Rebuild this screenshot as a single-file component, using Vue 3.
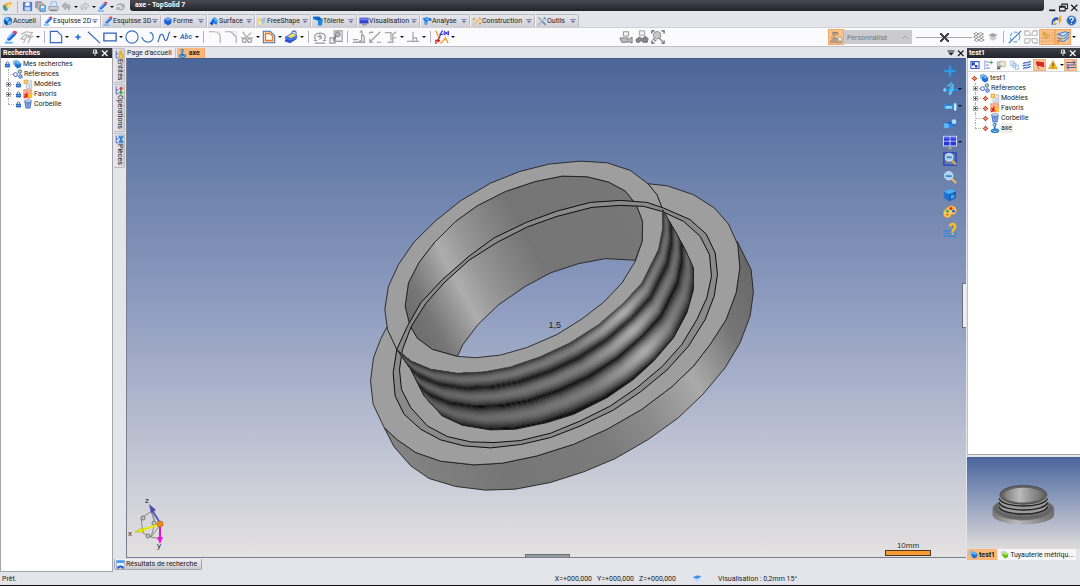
<script setup>
const quick = [
  { icon: 'save', label: 'Enregistrer' },
  { icon: 'saveall', label: 'Tout enregistrer' },
  { icon: 'print', label: 'Imprimer' },
  { icon: 'undo', label: 'Annuler', menu: true },
  { icon: 'redo', label: 'Rétablir', menu: true },
  { icon: 'pencil', label: 'Modifier', menu: true },
  { icon: 'refresh', label: 'Actualiser' },
]

const ribbon = [
  { icon: 'home', text: 'Accueil', size: 'w40', plain: true },
  { icon: 'pencil', text: 'Esquisse 2D', size: 'w60', active: true },
  { icon: 'pencil', text: 'Esquisse 3D', size: 'w60' },
  { icon: 'forme', text: 'Forme', size: 'w46' },
  { icon: 'surface', text: 'Surface', size: 'w48' },
  { icon: 'freeshape', text: 'FreeShape', size: 'w56' },
  { icon: 'tolerie', text: 'Tôlerie', size: 'w46' },
  { icon: 'monitor', text: 'Visualisation', size: 'w63' },
  { icon: 'analyse', text: 'Analyse', size: 'w50' },
  { icon: 'construct', text: 'Construction', size: 'w65' },
  { icon: 'tools', text: 'Outils', size: 'w44' },
]

const toolsLeft = [
  ['pencil', 'Esquisse'], ['sketch', 'Opération', 1], null,
  ['page', 'Contour', 1], ['point', 'Point'], ['line', 'Ligne'], ['rect', 'Rectangle', 1],
  ['circle', 'Cercle'], ['arc', 'Arc'], ['spline', 'Spline', 1], ['abc', 'Texte', 1], null,
  ['fillet', 'Congé'], ['chamfer', 'Chanfrein'], ['cut', 'Limiter', 1], ['offset', 'Décalage', 1], ['book', 'Plan', 1], null,
  ['gauge', 'Mesure'], ['inspect', 'Inspecter'], null,
  ['dim1', 'Cote horizontale'], ['dim2', 'Cote oblique'], ['dim3', 'Cote alignée', 1], ['perp', 'Contrainte', 1], null,
  ['fx', 'Fonction', 1],
]

const toolsMid = [['cam', 'Filmer'], ['bino', 'Chercher'], ['frame', 'Cadrer']]
const toolsRight = [['hatch', 'Transparence'], ['cone', 'Couche']]
const toolsEnd = [['compass', 'Cercle tangent'], ['four', 'Symétrie'], ['grid', 'Grille', true], ['layers', 'Calques', true]]

const sideTabs = [
  { icon: 'ent', text: 'Entités', size: 'h35' },
  { icon: 'ops', text: 'Opérations', size: 'h48' },
  { icon: 'parts', text: 'Pièces', size: 'h35' },
]

const leftTree = [
  { mark: 'lock', icon: 'cubes', text: 'Mes recherches', root: true },
  { icon: 'refs', text: 'Références', bare: true },
  { mark: 'lock', icon: 'models', text: 'Modèles', plus: true },
  { mark: 'lock', icon: 'fav', text: 'Favoris', plus: true },
  { mark: 'lock', icon: 'bin', text: 'Corbeille', last: true },
]

const rightTree = [
  { mark: 'cross', icon: 'cubes', text: 'test1', root: true },
  { icon: 'refs', text: 'Références', bare: true, plus: true },
  { mark: 'cross', icon: 'models', text: 'Modèles', plus: true },
  { mark: 'cross', icon: 'fav', text: 'Favoris', plus: true },
  { mark: 'cross', icon: 'bin', text: 'Corbeille' },
  { mark: 'cross', icon: 'part', text: 'axe', last: true, chosen: true },
]

const panelTools = [
  ['zoomsel', 'Sélection'], ['treeadd', 'Développer'], ['copyset', 'Dépendances'], ['pages', 'Versions'],
  ['waves', 'Couches'], ['flag', 'Signaler', true], ['warn', 'Alertes', false, true], ['swap', 'Synchroniser', true],
]

const viewTools = [
  ['plus', 'Centrer'], ['plane', 'Orienter', 1], ['camera', 'Caméra', 1], ['binocular', 'Observer'], ['views', 'Vues', 1],
  ['zoombox', 'Zoom fenêtre'], ['zoom', 'Zoom'], ['cube', 'Perspective'], ['palette', 'Couleurs'], ['help', 'Aide'],
]

// Thread: the rim outline is swept along the part's axis, darkest in each groove.
const grooves = [-0.02, 0.27, 0.6, 1]
const steps = 60
const thread = Array.from({ length: steps + 1 }, (_, i) => {
  const t = 1 - i / steps
  let k = 0
  while (k < grooves.length - 2 && t > grooves[k + 1]) k++
  const phase = (t - grooves[k]) / (grooves[k + 1] - grooves[k])
  const light = Math.pow(Math.max(0, Math.sin(Math.PI * phase)), 0.9)
  return { move: `translate(${Math.round(95 * t)} ${Math.round(170 * t)})`, dark: 0.95 * (1 - light) }
})
</script>

<template>
  <svg class="defs" aria-hidden="true">
    <symbol id="logo" viewBox="0 0 16 16"><path d="M1 7l3-3 11-3-3 6-6 7-4-2z" fill="#f7a83c" /><path d="M1 7l7-1 1 6-4 3-3-4z" fill="#2c9bb5" /><path d="M6 6l9-5-3 7-5 4z" fill="#ffc94e" /><path d="M8 7l4-3-3 5z" fill="#fff3c4" /></symbol>
    <symbol id="save" viewBox="0 0 16 16"><path d="M2 2h12v12H2z" fill="#5b7fd6" stroke="#3e57a8" /><path d="M5 2h6v5H5z" fill="#fff" /><path d="M4 9h8v5H4z" fill="#c9dcf7" /></symbol>
    <symbol id="saveall" viewBox="0 0 16 16"><path d="M1 1h8v9H1z" fill="#8fa6dc" stroke="#7486b8" /><path d="M4 3h8v9H4z" fill="#e8c7a2" stroke="#b5884f" /><path d="M7 6h8v9H7z" fill="#78b8e8" stroke="#446fae" /><path d="M9 7h4v3H9z" fill="#fff" /></symbol>
    <symbol id="print" viewBox="0 0 16 16"><path d="M5 1h7l1 7H3z" fill="#d5e6fb" stroke="#8ba6d0" /><path d="M1 8h14v5H1z" fill="#c9cdd8" stroke="#9295a0" /><path d="M3 14h10" stroke="#777" stroke-width="1.500" /></symbol>
    <symbol id="undo" viewBox="0 0 16 16"><path d="M1 7l6-5v3c7-1 8 4 4 9 1-4-1-5-4-4v3z" fill="#b5b5b9" stroke="#8f8f94" stroke-width=".7" /></symbol>
    <symbol id="redo" viewBox="0 0 16 16"><path d="M15 7L9 2v3C2 4 1 9 5 14c-1-4 1-5 4-4v3z" fill="#d6d6da" stroke="#9a9aa0" stroke-width=".7" /></symbol>
    <symbol id="refresh" viewBox="0 0 16 16"><path d="M2 7c1-4 7-5 10-2l2-2v6H8l2-2C8 5 5 5 4 7zM14 9c-1 5-7 6-10 3l-2 2V9h6l-2 2c2 1 5 1 6-2z" fill="#a9a9ae" /></symbol>
    <symbol id="pencil" viewBox="0 0 16 16"><path d="M1 14.500h9" stroke="#57b6f4" stroke-width="2" /><path d="M2 14l2-5 6-7 4 3-7 7z" fill="#1f66e0" /><path d="M4 9l6-7 1.500 1.500-6 6.500z" fill="#86bcff" /><path d="M10 2c1-2 5-1 5 1l-1.500 2.500z" fill="#ee3a45" /><path d="M2 14l1.500-3.500L6 12.500z" fill="#d9dff0" /></symbol>
    <symbol id="sketch" viewBox="0 0 16 16"><path d="M1 5l6-3 7 1-3 4-5-2-5 5 5 1M4 15L8 6l4 3-3 6M9 9l6-2" fill="none" stroke="#b4b4b4" stroke-width="1.300" /></symbol>
    <symbol id="home" viewBox="0 0 16 16"><circle cx="8" cy="8" r="6.500" fill="#1b6fd0" /><path d="M3 4l5-2 2 3-4 4zM8 9l5-2-1 6-4 1z" fill="#79c3ff" /><path d="M2 7l4 3 1 5-4-3z" fill="#0b3f98" /></symbol>
    <symbol id="forme" viewBox="0 0 16 16"><path d="M2 5l6-3 6 3-1 7-5 3-6-4z" fill="#1d5fd8" /><path d="M2 5l6-3 6 3-6 3z" fill="#65a8fb" /></symbol>
    <symbol id="surface" viewBox="0 0 16 16"><path d="M1 11c4-1 2-6 8-9l5 5-2 7-5-3z" fill="#166de0" /><path d="M7 4l3-2 4 5-3 4z" fill="#50b1ff" /><path d="M1 11l6 0-2 4z" fill="#0842a3" /></symbol>
    <symbol id="freeshape" viewBox="0 0 16 16"><path d="M1 3l5 2 8-3-1 8-5 5-5-4z" fill="#f3d54c" /><path d="M6 5l8-3-1 8-6 4z" fill="#9dc4ec" /><path d="M6 5l2 10-5-4z" fill="#ffef9a" /></symbol>
    <symbol id="tolerie" viewBox="0 0 16 16"><path d="M0 1h10l6 5-2 9H8V7L0 5z" fill="#178ae8" /><path d="M0 1h10l4 4-6 2z" fill="#0f63bd" /></symbol>
    <symbol id="monitor" viewBox="0 0 16 16"><path d="M1 3h14v9H1z" fill="#2f3fd4" stroke="#8690c4" /><path d="M2 4h12v3H2z" fill="#6c82f1" /><path d="M5 14h7" stroke="#8b8b9c" stroke-width="2" /></symbol>
    <symbol id="analyse" viewBox="0 0 16 16"><path d="M1 4l6-2 8 2v4l-6-1-1 7-4-1V8z" fill="#1b73dd" /><path d="M5 5h6M6 9v4" stroke="#a8dcff" stroke-width="1.500" /></symbol>
    <symbol id="construct" viewBox="0 0 16 16"><path d="M2 14L13 4" stroke="#f2b64b" stroke-width="3" stroke-dasharray="3 1.500" /><path d="M3 3v4M1 5h4M13 10v4M11 12h4M11 2l4 3" stroke="#e88c2d" stroke-width="1.500" /></symbol>
    <symbol id="tools" viewBox="0 0 16 16"><path d="M2 2l12 12" stroke="#a0a4aa" stroke-width="2.400" /><path d="M2 15L13 3" stroke="#b8bdc4" stroke-width="2.400" /><path d="M11 2l3 3M8 9l6 5" stroke="#4f91c4" stroke-width="1.800" /></symbol>
    <symbol id="page" viewBox="0 0 16 16"><path d="M1.500 1.500h8l5 5v8h-13zM9.500 1.500l5 5" fill="none" stroke="#3467b5" stroke-width="1.300" /></symbol>
    <symbol id="point" viewBox="0 0 16 16"><path d="M8 5v6M5 8h6" stroke="#2f78d8" stroke-width="2" /></symbol>
    <symbol id="line" viewBox="0 0 16 16"><path d="M1 2l14 13" stroke="#3467b5" stroke-width="1.300" /></symbol>
    <symbol id="rect" viewBox="0 0 16 16"><path d="M1 3.500h14v9H1z" fill="none" stroke="#2c62b4" stroke-width="1.500" /></symbol>
    <symbol id="circle" viewBox="0 0 16 16"><circle cx="8" cy="8" r="7" fill="none" stroke="#3a72c0" stroke-width="1.300" /></symbol>
    <symbol id="arc" viewBox="0 0 16 16"><path d="M1 8c2 7 11 8 13 1 0-3-1-6-4-6" fill="none" stroke="#3a72c0" stroke-width="1.300" /></symbol>
    <symbol id="spline" viewBox="0 0 16 16"><path d="M1 14C3 9 3 4 6 5s1 7 4 7 2-8 5-10" fill="none" stroke="#3467b5" stroke-width="1.300" /></symbol>
    <symbol id="fillet" viewBox="0 0 16 16"><path d="M1 2h6c5 0 7 3 7 7v6" fill="none" stroke="#aaa" stroke-width="1.300" /><path d="M8 2h6v5" fill="none" stroke="#ddd" /></symbol>
    <symbol id="chamfer" viewBox="0 0 16 16"><path d="M1 2h7l6 6v7" fill="none" stroke="#aaa" stroke-width="1.300" /><path d="M9 2h5v5" fill="none" stroke="#ddd" /></symbol>
    <symbol id="cut" viewBox="0 0 16 16"><path d="M3 2l5 7M13 3L5 10M1 9h14" stroke="#b0b0b0" stroke-width="1.500" /><circle cx="5" cy="12" r="2.200" fill="none" stroke="#a3a3a3" stroke-width="1.500" /><circle cx="11" cy="12" r="2.200" fill="none" stroke="#a3a3a3" stroke-width="1.500" /></symbol>
    <symbol id="offset" viewBox="0 0 16 16"><path d="M1.500 1.500h8l5 5v8h-13z" fill="#fbe3cf" stroke="#466fae" stroke-width="1.200" /><path d="M4 4h5l3 3v5H4z" fill="#fff" stroke="#ea7a2b" stroke-width="1.500" /></symbol>
    <symbol id="book" viewBox="0 0 16 16"><path d="M1 11l9-4 5 3-8 5-6-2z" fill="#3450c8" /><path d="M1 8l8-5 6 2v4l-7 3-7-2z" fill="#4479e0" /><path d="M4 7l6-3 4 2-6 3z" fill="#ffe053" /><path d="M9 3c2-3 5-2 5 1" fill="none" stroke="#4a67d4" stroke-width="1.500" /></symbol>
    <symbol id="gauge" viewBox="0 0 16 16"><path d="M3 11C-3 1 19 1 13 11M5 7l3 1 0-2 2 3-3 2M1 12h4M11 12h4M2 15h12" fill="none" stroke="#999" stroke-width="1.300" /></symbol>
    <symbol id="inspect" viewBox="0 0 16 16"><path d="M6 1h9v12H6zM1 9h6v6H1z" fill="#f1f1f1" stroke="#999" stroke-width="1.200" /><circle cx="10" cy="5" r="2.800" fill="#bbb" stroke="#777" /><path d="M8 7l-3 5" stroke="#777" stroke-width="1.500" /></symbol>
    <symbol id="dim1" viewBox="0 0 16 16"><path d="M1 11h6M1 14h14M9 3l2-2 1 4 2 3v5M11 5v7l-3 1" fill="none" stroke="#a3a3a3" stroke-width="1.500" /></symbol>
    <symbol id="dim2" viewBox="0 0 16 16"><path d="M2 14L14 2M1 4l3-2M10 14h5M3 2l3 1M2 10v4h4" fill="none" stroke="#999" stroke-width="1.300" /></symbol>
    <symbol id="dim3" viewBox="0 0 16 16"><path d="M1 3h7v9M4 14h7M10 13V5l4-3M10 9h4" fill="none" stroke="#a9a9a9" stroke-width="1.500" /></symbol>
    <symbol id="perp" viewBox="0 0 16 16"><path d="M8 2v11M1 13h14M8 9h4v4" fill="none" stroke="#a6a6a6" stroke-width="1.400" /></symbol>
    <symbol id="fx" viewBox="0 0 16 16"><path d="M1 1l4 9M6 15l2-1 4-5 3 6" fill="none" stroke="#f09a2c" stroke-width="1.500" /><path d="M4 10c2 0 2-9 5-9M5 5h4M11 1c-1 2-1 3 0 5M15 1c1 2 1 3 0 5M11.500 2l3 3M14.500 2l-3 3" fill="none" stroke="#2f2fe0" stroke-width="1.200" /><path d="M1 16v-4h4M3 10l2 2-2 2" fill="none" stroke="#e02020" stroke-width="1.500" /></symbol>
    <symbol id="cam" viewBox="0 0 16 16"><path d="M5 2h6v5H5z" fill="#f3f3f3" stroke="#888" /><path d="M1 9h9v2l5-3v7l-5-2v1H3z" fill="#bbb" stroke="#777" /></symbol>
    <symbol id="bino" viewBox="0 0 16 16"><path d="M5 1h6v5H5z" fill="#f3f3f3" stroke="#999" /><path d="M1 11l4-3 3 2 4-3 3 3-1 4H9L7 12l-2 2H2z" fill="#888" stroke="#666" /></symbol>
    <symbol id="frame" viewBox="0 0 16 16"><path d="M1 4V1h3M12 1h3v3M1 12v3h3M15 12v3h-3" fill="none" stroke="#555" stroke-width="1.300" /><circle cx="7" cy="6" r="4.300" fill="#c9c9c9" stroke="#888" /><path d="M9 9l5 5M2 10l4 3" stroke="#999" stroke-width="2" /></symbol>
    <symbol id="shade" viewBox="0 0 16 16"><path d="M3 2h6l-1 5H4zM1 12l5-3h5l4 3v3H1z" fill="#b99b82" /><path d="M10 12c0-6 5-5 5 0" fill="#eee" stroke="#999" /><path d="M5 3h5v3M2 9h6" stroke="#777" fill="none" /></symbol>
    <symbol id="hatch" viewBox="0 0 16 16"><path d="M1 4l3-2 3 2-3 2zM7 4l3-2 4 2-4 2zM1 8l3-2 3 2-3 2zM8 8l3-2 3 2-3 2zM2 12l3-2 3 2-3 2zM8 12l3-2 4 2-4 2z" fill="#fff" stroke="#777" stroke-width="1" /></symbol>
    <symbol id="cone" viewBox="0 0 16 16"><path d="M3 5l5-2 5 2-1 6-4 2-4-2z" fill="#cfcfcf" /><path d="M2 5l6-2 6 2-6 3z" fill="#a2a2a2" /></symbol>
    <symbol id="compass" viewBox="0 0 16 16"><circle cx="8" cy="8" r="5.500" fill="none" stroke="#6fa8de" stroke-width="1.300" stroke-dasharray="4 2" /><path d="M1 15L15 1" stroke="#3a6fba" stroke-width="1.400" /></symbol>
    <symbol id="four" viewBox="0 0 16 16"><path d="M1 6V1h4c2 1 2 3 2 5zM15 6V1h-4C9 2 9 4 9 6zM1 10v5h4c2-1 2-3 2-5zM15 10v5h-4c-2-1-2-3-2-5z" fill="#fff" stroke="#b4b4b4" stroke-width="1.200" /></symbol>
    <symbol id="grid" viewBox="0 0 16 16"><path d="M3 2v12M7 2v12M11 2v12M14.500 2v12M1 5h14M1 9h14M1 13h14" stroke="#cf9255" stroke-dasharray="1 1.500" /><path d="M4 2l6 5-4 3z" fill="#ffb82d" stroke="#b87b2e" stroke-width=".7" /></symbol>
    <symbol id="layers" viewBox="0 0 16 16"><path d="M2 5l8-3 5 1-7 4zM1 9l8 1 6-5M1 12l8 1 6-5" fill="#d6e3f2" stroke="#4a86cf" stroke-width="1.300" /><path d="M1 15l6-6" stroke="#e98a28" stroke-width="2" /></symbol>
    <symbol id="fish" viewBox="0 0 16 16"><path d="M1 14V9c2-5 6-7 10-5l-1 4C8 6 6 7 5 11l3 1-1 2z" fill="#2554c8" /><path d="M3 9h4v5H3z" fill="#f8cf3f" /><path d="M13 1l2 0-1 5h2l-5 9 1-7h-2z" fill="#f0a020" /></symbol>
    <symbol id="qmark" viewBox="0 0 16 16"><circle cx="8" cy="8" r="7" fill="#2866b8" stroke="#8eb2dc" /><path d="M5.500 6c0-4 6-3 5 0-1 2-2.500 2-2.500 4M8 11.500v1.500" fill="none" stroke="#fff" stroke-width="1.700" /></symbol>
    <symbol id="pin" viewBox="0 0 16 16"><path d="M5 2h6v6h2M3 8h10M9.500 2v6M5 2v6M8 8v6" fill="none" stroke="currentColor" stroke-width="1.600" /></symbol>
    <symbol id="close" viewBox="0 0 16 16"><path d="M2 3l11 11M13 3L2 14" stroke="currentColor" stroke-width="2.400" /></symbol>
    <symbol id="min" viewBox="0 0 16 16"><path d="M2 13h11" stroke="currentColor" stroke-width="3" /></symbol>
    <symbol id="restore" viewBox="0 0 16 16"><path d="M5 6V2h10v8h-4M1 6h10v8H1zM1 7.500h10" fill="none" stroke="currentColor" stroke-width="1.800" /></symbol>
    <symbol id="drop" viewBox="0 0 16 16"><path d="M1 3h14v2H1zM2 7h12l-6 6z" fill="currentColor" /></symbol>
    <symbol id="lock" viewBox="0 0 16 16"><path d="M5 8V5c0-4 6-4 6 0v3" fill="none" stroke="#3c6c9f" stroke-width="2" /><path d="M3 7h10v7H3z" fill="#1b6fd8" stroke="#0c3f8c" /><path d="M5 10h6" stroke="#8ac8ff" stroke-width="1.500" /></symbol>
    <symbol id="cross" viewBox="0 0 16 16"><path d="M8 1l3 4 4 3-4 3-3 4-3-4-4-3 4-3z" fill="#b8452c" /><path d="M7 5h2v2h2v2H9v2H7V9H5V7h2z" fill="#f0a080" /></symbol>
    <symbol id="cubes" viewBox="0 0 16 16"><path d="M1 3l6-2 5 3v6l-6 2-4-3z" fill="#80b8ea" /><path d="M5 6l5-2 5 3-1 6-5 2-4-3z" fill="#1d6fd2" /><path d="M5 6l5-2 5 3-5 2z" fill="#62b1f5" /></symbol>
    <symbol id="green" viewBox="0 0 16 16"><path d="M1 3l6-2 5 3v6l-6 2-4-3z" fill="#c6d7e6" /><path d="M4 6l6-2 5 3-1 6-5 2-4-3z" fill="#6fbf1f" /><path d="M4 6l6-2 5 3-5 2z" fill="#b9ee5a" /></symbol>
    <symbol id="refs" viewBox="0 0 16 16"><path d="M4 9l7-5M4 9l8 4M11 4l1 9" stroke="#8a8f98" /><circle cx="4" cy="9" r="3" fill="#fff" stroke="#5674c9" stroke-width="1.700" /><circle cx="11" cy="4" r="2.800" fill="#a8d8a0" stroke="#4774b0" stroke-width="1.500" /><circle cx="12" cy="12" r="2.800" fill="#9ebcf0" stroke="#3e5fc0" stroke-width="1.500" /></symbol>
    <symbol id="models" viewBox="0 0 16 16"><path d="M5 3h9v12H5z" fill="#e8ecf2" stroke="#9aa2b0" /><path d="M1 1h7v7H1z" fill="#f2ad4a" /><path d="M3 3h3v3H3z" fill="#fbdc96" /><path d="M8 7h4v7H8z" fill="#c9d2df" /></symbol>
    <symbol id="fav" viewBox="0 0 16 16"><path d="M1 1h13v13H1z" fill="#f9b08d" stroke="#e08a68" /><path d="M6 4l2 4h5l-4 3 1 4-4-2-5 2 2-5-2-2h4z" fill="#e3242b" /><path d="M11 5l1 3h4l-3 3 1 4-4-2-3 1 1-4-2-2h4z" fill="#ffc928" /></symbol>
    <symbol id="bin" viewBox="0 0 16 16"><path d="M2 3h12l-2 12H4z" fill="#5782cf" /><ellipse cx="8" cy="3" rx="6" ry="2" fill="#cfdcf3" stroke="#5d78ad" /><path d="M6 7l.5 6M10 7l-.5 6" stroke="#b4cdf5" stroke-width="1.200" /></symbol>
    <symbol id="part" viewBox="0 0 16 16"><path d="M7 0c5 0 4 4 2 5v4c3-1 6 1 6 4-2 4-12 4-14 0 0-3 3-4 5-4V5C3 4 4 0 7 0z" fill="#2a7fc4" /><circle cx="7" cy="3" r="1.400" fill="#d3efff" /><path d="M4 12c2 2 6 2 8 0" stroke="#9fd6f6" fill="none" stroke-width="1.600" /></symbol>
    <symbol id="ent" viewBox="0 0 16 16"><path d="M2 1v13h4M2 7h4" fill="none" stroke="#3a52cc" stroke-width="1.500" /><circle cx="10" cy="4" r="3.500" fill="#f0b429" /><circle cx="11" cy="11" r="4" fill="#f5c645" stroke="#b98518" /></symbol>
    <symbol id="ops" viewBox="0 0 16 16"><path d="M2 1v13h4M2 7h4" fill="none" stroke="#3a52cc" stroke-width="1.500" /><path d="M11 1l4 4h-3v3H9V5H7z" fill="#e03030" /><path d="M10 15l-4-4h3V8h3v3h3z" fill="#2fa43a" /></symbol>
    <symbol id="parts" viewBox="0 0 16 16"><path d="M2 1v13h4M2 7h4" fill="none" stroke="#3a52cc" stroke-width="1.500" /><path d="M6 1h9v5H6zM7 9h8v6H7z" fill="#5aa6ea" /><path d="M8 2l5 12M13 2L8 14" stroke="#1c63b6" stroke-width="1.400" /></symbol>
    <symbol id="zoomsel" viewBox="0 0 16 16"><path d="M1.500 2.500h13v11h-13z" fill="#fff" stroke="#3f58d4" stroke-width="1.800" /><path d="M4 5l7 6M4 9V5h4M8 11h3V8" fill="none" stroke="#1c3fa8" stroke-width="1.800" /></symbol>
    <symbol id="treeadd" viewBox="0 0 16 16"><path d="M3 1v14" stroke="#3f58d4" stroke-width="1.500" stroke-dasharray="2 1" /><path d="M5 3h4M5 8h4M5 13h6" stroke="#7d93d8" stroke-width="2" /><path d="M13 1v6M10 4h6" stroke="#3aa845" stroke-width="1.600" /></symbol>
    <symbol id="copyset" viewBox="0 0 16 16"><path d="M2 3h9v7H2z" fill="#cfd8ea" stroke="#8390a8" /><path d="M6 2h9v9H6z" fill="#f4e3c2" stroke="#a0a8b8" /><path d="M2 15l6-6M3 10v4h4" fill="none" stroke="#333" stroke-width="1.500" /></symbol>
    <symbol id="pages" viewBox="0 0 16 16"><path d="M2 2h6v7H2zM6 5h5v7H6zM10 8h5v7h-5z" fill="#f4f9ff" stroke="#8eb0d6" stroke-width="1.200" /></symbol>
    <symbol id="waves" viewBox="0 0 16 16"><path d="M2 6c4-4 5 1 12-4M1 10c5-4 6 1 13-4M2 14c4-4 6 1 12-4" fill="none" stroke="#3e69c6" stroke-width="1.900" /><path d="M10 1L7 15" stroke="#7f9fdf" /></symbol>
    <symbol id="flag" viewBox="0 0 16 16"><path d="M1 3c5-3 6 1 13 0l1 8c-4 1-6-3-11-1z" fill="#df2626" /><path d="M2 3l4 12" stroke="#8c5244" stroke-width="1.200" /></symbol>
    <symbol id="warn" viewBox="0 0 16 16"><path d="M8 1l7 13H1z" fill="#fdbc22" stroke="#c58a13" /><path d="M8 5v5M8 11.500v1.500" stroke="#333" stroke-width="1.600" /></symbol>
    <symbol id="swap" viewBox="0 0 16 16"><path d="M0 4h14M11 1l4 3-4 3M16 12H2M5 9l-4 3 4 3M0 8h16" fill="none" stroke="#4a5fae" stroke-width="1.600" /></symbol>
    <symbol id="plus" viewBox="0 0 16 16"><path d="M8 1l1 6 6 1-6 1-1 6-1-6-6-1 6-1z" fill="#27a5f7" stroke="#27a5f7" stroke-width=".8" /></symbol>
    <symbol id="plane" viewBox="0 0 16 16"><path d="M0 9h16" stroke="#1d9af2" stroke-width="2.400" /><path d="M8 1c4 2 4 3 3 7s-3 6-3 7M5 4c4-1 5 1 4 4s-2 5-2 6" fill="none" stroke="#5fc8fb" stroke-width="1.500" /><path d="M3 6l-3 3 3 3z" fill="#8adcff" /></symbol>
    <symbol id="camera" viewBox="0 0 16 16"><path d="M1 4l2 3h6l4-3 2 0v10l-5-3H2l-1 1z" fill="#2f8fe6" /><path d="M3 8h7v3H3z" fill="#8adcff" /><ellipse cx="14" cy="9" rx="1.500" ry="4.500" fill="#c9efff" /></symbol>
    <symbol id="binocular" viewBox="0 0 16 16"><path d="M3 6l5 0 3-4 4 3-2 5-4 0-4 4-4-3z" fill="#1c62cc" /><circle cx="4" cy="10" r="3.200" fill="#5fb6f8" /><circle cx="9" cy="10" r="2.400" fill="#2f86e6" /><circle cx="12.500" cy="5.500" r="2.800" fill="#a5e0ff" /></symbol>
    <symbol id="views" viewBox="0 0 16 16"><path d="M0 1h16v12H0z" fill="#e4e8f4" /><path d="M1 2h6.500v4.500H1zM8.500 2H15v4.500H8.500zM1 7.500h6.500V12H1zM8.500 7.500H15V12H8.500z" fill="#2738d8" /><path d="M1 2h6v2H1zM9 2h6v2H9z" fill="#5a72f0" /><path d="M6 15h4" stroke="#cbb98a" stroke-width="1.500" /></symbol>
    <symbol id="zoombox" viewBox="0 0 16 16"><path d="M1 1h14v14H1z" fill="none" stroke="#2740bb" stroke-width="1.500" /><circle cx="7" cy="6" r="4.500" fill="#9fd6f3" stroke="#d9e5ee" /><path d="M4 6h6" stroke="#4486c4" stroke-width="2" /><path d="M10 10l5 4" stroke="#e4b455" stroke-width="2.400" /></symbol>
    <symbol id="zoom" viewBox="0 0 16 16"><circle cx="6.500" cy="6.500" r="4.800" fill="#9fd6f3" stroke="#d9e5ee" /><path d="M3 7h7" stroke="#4486c4" stroke-width="2" /><path d="M10 10l5 5" stroke="#e9bd63" stroke-width="2.400" /></symbol>
    <symbol id="cube" viewBox="0 0 16 16"><path d="M1 4l8-3 6 3-1 8-7 3-6-4z" fill="#1c70d6" /><path d="M1 4l8-3 6 3-8 3z" fill="#4ab1f6" /><path d="M7 7l8-3-1 8-7 3z" fill="#155ab0" /><path d="M9 8l4-1v4l-4 2z" fill="#3fa5ea" /></symbol>
    <symbol id="palette" viewBox="0 0 16 16"><path d="M5 3c6-5 12 0 10 5s-5 1-6 4-6 4-8 0 0-6 4-9z" fill="#f5cb6a" stroke="#c99137" /><circle cx="5" cy="7" r="1.600" fill="#36a93f" /><circle cx="9" cy="4" r="1.800" fill="#e1262b" /><circle cx="12" cy="7" r="1.600" fill="#2c55d6" /><circle cx="5" cy="11" r="1.500" fill="#f57c1d" /></symbol>
    <symbol id="help" viewBox="0 0 16 16"><path d="M0 9h9M0 12h16M1 15h14" stroke="#2c86dc" stroke-width="1.300" /><path d="M8 4c0-4 6-4 6 0 0 3-3 3-3 6M11 11v2" fill="none" stroke="#ffc321" stroke-width="2.600" /></symbol>
    <symbol id="results" viewBox="0 0 16 16"><path d="M1 1h14v12H1z" fill="#e7f3ff" stroke="#5b9ce0" /><path d="M1 1h14v4H1z" fill="#3f93e8" /><path d="M2 15c0-7 12-7 12 0h-3c0-3-6-3-6 0z" fill="#2446c0" /></symbol>
    <symbol id="dish" viewBox="0 0 16 16"><path d="M1 5l8-3 6 2v7l-7 4-6-4z" fill="#dbe6fa" /><path d="M1 5l8-3 6 2-7 4z" fill="#3d8eea" /><path d="M2 8l6 3 6-4" fill="none" stroke="#9ec3f3" /></symbol>
  </svg>

  <div class="app">
    <header class="titlebar">
      <div class="quick">
        <button class="qb" aria-label="TopSolid"><svg><use href="#logo" /></svg></button>
        <i class="sep"></i>
        <template v-for="q in quick" :key="q.icon">
          <button class="qb" :aria-label="q.label"><svg><use :href="'#' + q.icon" /></svg></button>
          <button v-if="q.menu" class="more narrow" :aria-label="q.label + ' : options'"></button>
        </template>
      </div>
      <h1 class="caption">axe - TopSolid 7</h1>
      <div class="win">
        <button aria-label="Réduire"><svg><use href="#min" /></svg></button>
        <button aria-label="Restaurer"><svg><use href="#restore" /></svg></button>
        <button aria-label="Fermer"><svg><use href="#close" /></svg></button>
      </div>
    </header>

    <nav class="ribbon">
      <button v-for="t in ribbon" :key="t.text" class="rtab" :class="[t.size, { active: t.active }]">
        <svg><use :href="'#' + t.icon" /></svg><span>{{ t.text }}</span>
        <svg v-if="!t.plain" class="dd"><use href="#drop" /></svg>
      </button>
      <span class="grow"></span>
      <button class="qb" aria-label="Assistance"><svg><use href="#fish" /></svg></button>
      <button class="qb" aria-label="Aide"><svg><use href="#qmark" /></svg></button>
    </nav>

    <div class="toolbar">
      <template v-for="(t, i) in toolsLeft" :key="i">
        <i v-if="!t" class="sep"></i>
        <template v-else>
          <button v-if="t[0] === 'abc'" class="tb abc">Abc</button>
          <button v-else class="tb" :aria-label="t[1]"><svg><use :href="'#' + t[0]" /></svg></button>
          <button v-if="t[2]" class="more" :aria-label="t[1] + ' : options'"></button>
        </template>
      </template>
      <span class="grow"></span>
      <button v-for="t in toolsMid" :key="t[0]" class="tb" :aria-label="t[1]"><svg><use :href="'#' + t[0]" /></svg></button>
      <span class="grow"></span>
      <button class="tb on" aria-label="Rendu"><svg><use href="#shade" /></svg></button>
      <select class="preset" aria-label="Précision" disabled><option>Personnalisé</option></select>
      <input class="slider" type="range" aria-label="Opacité" min="0" max="100" value="50" />
      <button v-for="t in toolsRight" :key="t[0]" class="tb slim" :aria-label="t[1]"><svg><use :href="'#' + t[0]" /></svg></button>
      <i class="sep"></i>
      <button v-for="t in toolsEnd" :key="t[0]" class="tb" :class="{ on: t[2] }" :aria-label="t[1]"><svg><use :href="'#' + t[0]" /></svg></button>
      <button class="more last" aria-label="Autres outils"></button>
    </div>

    <main class="work">
      <aside class="panel left">
        <div class="phead"><h2>Recherches</h2>
          <button aria-label="Épingler"><svg><use href="#pin" /></svg></button>
          <button aria-label="Fermer"><svg><use href="#close" /></svg></button>
        </div>
        <ul class="tree">
          <li v-for="n in leftTree" :key="n.text" :class="{ root: n.root, last: n.last, bare: n.bare }">
            <span v-if="!n.root" class="branch"><button v-if="n.plus" class="exp" :aria-label="'Développer ' + n.text"></button></span>
            <svg v-if="n.mark" class="mark"><use :href="'#' + n.mark" /></svg>
            <svg class="node"><use :href="'#' + n.icon" /></svg><span>{{ n.text }}</span>
          </li>
        </ul>
      </aside>

      <section class="middle">
        <div class="upper">
          <div class="side">
            <button v-for="s in sideTabs" :key="s.text" :class="s.size"><svg><use :href="'#' + s.icon" /></svg><span>{{ s.text }}</span></button>
          </div>
          <div class="doc">
            <div class="dtabs">
              <button class="dt">Page d'accueil</button>
              <button class="dt cur"><svg><use href="#part" /></svg>axe</button>
              <span class="grow"></span>
              <button class="mini" aria-label="Documents"><svg><use href="#drop" /></svg></button>
              <button class="mini" aria-label="Fermer"><svg><use href="#close" /></svg></button>
            </div>
            <div class="view">
              <svg class="scene" viewBox="126 59 840 499" role="img" aria-label="axe">
                <defs>
                  <linearGradient id="gside" gradientUnits="userSpaceOnUse" x1="150" y1="950" x2="1180" y2="355">
                    <stop offset="0" stop-color="#828282" /><stop offset=".2" stop-color="#767676" /><stop offset=".45" stop-color="#7b7b7b" />
                    <stop offset=".58" stop-color="#8b8b8b" /><stop offset=".73" stop-color="#aaa" /><stop offset=".87" stop-color="#767676" /><stop offset="1" stop-color="#676767" />
                  </linearGradient>
                  <linearGradient id="gwall" gradientUnits="userSpaceOnUse" x1="130" y1="560" x2="840" y2="180">
                    <stop offset="0" stop-color="#686868" /><stop offset=".12" stop-color="#767676" /><stop offset=".2" stop-color="#929292" /><stop offset=".27" stop-color="#adadad" />
                    <stop offset=".36" stop-color="#989898" /><stop offset=".45" stop-color="#888" /><stop offset=".58" stop-color="#757575" /><stop offset="1" stop-color="#777" />
                  </linearGradient>
                  <linearGradient id="gridge" gradientUnits="userSpaceOnUse" x1="150" y1="950" x2="1180" y2="355">
                    <stop offset="0" stop-color="#444" /><stop offset=".15" stop-color="#646464" /><stop offset=".3" stop-color="#707070" /><stop offset=".5" stop-color="#7c7c7c" />
                    <stop offset=".66" stop-color="#acacac" /><stop offset=".76" stop-color="#7c7c7c" /><stop offset=".9" stop-color="#606060" /><stop offset="1" stop-color="#333" />
                  </linearGradient>
                  <path id="rim" d="M660 34L740 39 810 62 863 102 890 135 907 180 908 235 895 300 845 400 790 460 715 525 630 580 540 622 450 653 370 668 290 672 210 660 150 635 108 600 80 540 72 480 83 410 113 345 160 277 225 213 300 153 390 100 478 65 565 43Z" />
                  <clipPath id="body"><path d="M108 600L150 635 210 660 290 672 370 668 450 653 540 622 630 580 715 525 790 460 845 400 895 300 908 235 907 180 945 245 975 300 1000 355 1000 420 980 490 940 565 880 635 820 690 740 745 640 795 560 820 465 840 390 842 305 828 245 800 190 740 150 660Z" /></clipPath>
                </defs>
                <g transform="translate(360 150) scale(.33333)" stroke="#1d1d1d" stroke-width="2.600" stroke-linejoin="round">
                  <path fill="url(#gside)" d="M1131 275L1173 360 1180 428 1170 500 1140 580 1095 655 1028 735 955 805 865 870 765 928 670 968 570 1000 465 1020 375 1023 285 1012 205 988 150 950 100 893 70 835 110 872 165 910 240 936 340 947 425 942 530 920 640 885 740 840 845 780 935 712 1000 650 1050 585 1098 510 1128 430 1139 355Z" />
                  <path fill="#9e9e9e" d="M863 102L920 108 1000 135 1063 175 1105 223 1133 285 1139 355 1128 430 1098 510 1050 585 1000 650 935 712 845 780 740 840 640 885 530 920 425 942 340 947 240 936 165 910 110 872 70 835 37 765 29 695 38 625 60 568 78 533 108 600 150 635 210 660 290 672 370 668 450 653 540 622 630 580 715 525 790 460 845 400 895 300 908 235 907 180 890 135Z" />
                  <path fill="url(#gwall)" d="M825 332L846 275 847 215 828 165 795 124 745 97 680 81 605 79 525 95 435 125 350 168 285 215 220 280 175 338 143 400 133 470 147 528 170 567 215 600 290 621 307 585 352 525 415 465 495 410 570 370 655 342 735 327Z" />
                  <path fill="#9e9e9e" fill-rule="evenodd" d="M660 34L740 39 810 62 863 102 890 135 907 180 908 235 895 300 845 400 790 460 715 525 630 580 540 622 450 653 370 668 290 672 210 660 150 635 108 600 80 540 72 480 83 410 113 345 160 277 225 213 300 153 390 100 478 65 565 43ZM605 79L680 81 745 97 795 124 828 165 847 215 846 275 825 335 785 400 730 458 665 508 590 555 500 594 420 617 345 625 290 621 215 600 170 567 147 528 133 470 143 400 175 338 220 280 285 215 350 168 435 125 525 95Z" />
                  <path fill="#8a8a8a" fill-rule="evenodd" stroke="#0d0d0d" stroke-width="3" d="M108 600L97 670 103 740 130 795 180 840 240 872 310 890 390 896 480 886 570 865 660 830 760 782 840 728 920 662 985 590 1035 510 1062 440 1072 375 1065 310 1038 253 990 210 910 175 860 158 780 152 690 158 590 184 500 217 400 265 325 320 245 390 180 460 140 530ZM125 600L116 660 122 720 150 775 200 830 260 862 330 878 400 880 480 874 570 852 660 815 750 770 830 715 905 652 965 585 1010 510 1040 445 1054 380 1048 315 1020 260 970 215 905 185 850 170 780 167 695 173 590 200 500 232 410 278 325 332 250 400 195 462 152 530Z" />
                  <g clip-path="url(#body)" stroke="none">
                    <path fill="#0b0b0b" d="M60 100H1100V900H60Z" />
                    <g v-for="(s, i) in thread" :key="i" :transform="s.move">
                      <use href="#rim" fill="url(#gridge)" /><use href="#rim" fill="#000" :fill-opacity="s.dark" />
                    </g>
                  </g>
                  <path fill="none" d="M108 600L150 660 190 740 245 800 305 828 390 842 465 840 560 820 640 795 740 745 820 690 880 635 940 565 980 490 1000 420 1000 355 975 300 945 245 907 180" />
                </g>
                <text class="dimtext" x="548" y="329">1,5</text>
              </svg>

              <svg class="triad" viewBox="0 0 40 52" role="img" aria-label="Repère x y z">
                <path d="M18 14L7 21l2 15 8 4 9 2M18 14l3 12M26 28l-9 12M17 14l4 12-4 14" fill="none" stroke="#888" />
                <g fill="#c5c5c5" stroke="#777"><circle cx="9" cy="21" r="2" /><circle cx="20" cy="26" r="2" /><circle cx="14" cy="39" r="2" /></g>
                <path d="M26 26L18 13" stroke="#5a5ab8" stroke-width="2" /><path d="M15 7l7 6-5 3z" fill="#4a4ab0" />
                <path d="M26 27L8 33" stroke="#e8e800" stroke-width="2" /><path d="M1 35l7-4 2 4z" fill="#f0f000" stroke="#a8a800" stroke-width=".5" />
                <path d="M26 28v13" stroke="#e010d0" stroke-width="2" /><path d="M23 40h6l-3 7z" fill="#f010e0" />
                <circle cx="26" cy="27" r="3" fill="#f08a1d" stroke="#a8590a" stroke-width=".6" />
                <text x="11" y="6">z</text><text x="-6" y="39">x</text><text x="23" y="51">y</text>
              </svg>

              <div class="vtools">
                <div v-for="v in viewTools" :key="v[0]" class="vrow">
                  <button class="vb" :aria-label="v[1]"><svg><use :href="'#' + v[0]" /></svg></button>
                  <button v-if="v[2]" class="more" :aria-label="v[1] + ' : options'"></button>
                </div>
              </div>
              <div class="scale"><span>10mm</span><i></i></div>
              <i class="grip right"></i><i class="grip bottom"></i>
            </div>
          </div>
        </div>
        <button class="results"><svg><use href="#results" /></svg>Résultats de recherche</button>
      </section>

      <aside class="panel proj">
        <div class="phead"><h2>test1</h2>
          <button aria-label="Épingler"><svg><use href="#pin" /></svg></button>
          <button aria-label="Fermer"><svg><use href="#close" /></svg></button>
        </div>
        <div class="pbox">
          <div class="ptools">
            <template v-for="p in panelTools" :key="p[0]">
              <button class="pb" :class="{ on: p[2] }" :aria-label="p[1]"><svg><use :href="'#' + p[0]" /></svg></button>
              <button v-if="p[3]" class="more narrow" aria-label="Options"></button>
            </template>
          </div>
          <ul class="tree">
            <li v-for="n in rightTree" :key="n.text" :class="{ root: n.root, last: n.last, bare: n.bare }">
              <span v-if="!n.root" class="branch"><button v-if="n.plus" class="exp" :aria-label="'Développer ' + n.text"></button></span>
              <svg v-if="n.mark" class="mark"><use :href="'#' + n.mark" /></svg>
              <svg class="node"><use :href="'#' + n.icon" /></svg><span :class="{ chosen: n.chosen }">{{ n.text }}</span>
            </li>
          </ul>
        </div>
        <div class="preview">
          <svg viewBox="293 18 337 275" role="img" aria-label="Aperçu de axe">
            <defs>
              <linearGradient id="pm"><stop offset="0" stop-color="#777" /><stop offset=".4" stop-color="#bbb" /><stop offset="1" stop-color="#6c6c6c" /></linearGradient>
            </defs>
            <path d="M369 175v14c0 40 184 40 184 0v-14z" fill="url(#pm)" />
            <ellipse cx="461" cy="173" rx="92" ry="34" fill="#6c6c6c" stroke="#8a8a8a" stroke-width="1" />
            <ellipse cx="461" cy="171" rx="82" ry="29" fill="none" stroke="#484848" stroke-width="1.500" />
            <path d="M390 132v34c6 30 136 30 142 0v-34z" fill="#9b9b9b" />
            <g fill="none" stroke="#222" stroke-width="4"><path d="M389 142c6 30 138 30 144 0" /><path d="M389 154c6 30 138 30 144 0" /><path d="M389 166c6 30 138 30 144 0" /></g>
            <ellipse cx="461" cy="131" rx="70" ry="28" fill="#636363" stroke="#3a3a3a" stroke-width="2" />
            <ellipse cx="461" cy="132" rx="59" ry="22" fill="url(#pm)" />
          </svg>
        </div>
        <div class="ptabs">
          <button class="cur"><svg><use href="#cubes" /></svg>test1</button>
          <button><svg><use href="#green" /></svg><span>Tuyauterie métriqu...</span></button>
        </div>
      </aside>
    </main>

    <footer class="status">
      <span>Prêt.</span>
      <div class="coords"><span>X=+000,000</span><span>Y=+000,000</span><span>Z=+000,000</span></div>
      <svg><use href="#dish" /></svg>
      <span>Visualisation : 0,2mm 15°</span>
    </footer>
  </div>
</template>

<style>
html, body { margin: 0; background: #e4e5ea; }
</style>

<style scoped>
.defs { position: absolute; width: 0; height: 0; }
.app { display: flex; flex-direction: column; min-height: 100vh; box-sizing: border-box; background: #e4e5ea; border-bottom: 1px solid #111; color: #1c1c22; font: 7px/10px Roboto, "Open Sans", sans-serif; overflow: hidden; }
button { margin: 0; padding: 0; border: 0; background: none; font: inherit; color: inherit; display: flex; align-items: center; justify-content: center; white-space: nowrap; }
h1, h2 { margin: 0; font-size: 7px; line-height: 10px; font-weight: 700; }
svg { display: block; flex: none; }
.grow { flex: 1; }
.sep { flex: none; width: 7px; height: 12px; background: linear-gradient(#b4b4ba, #b4b4ba) center / 1px 100% no-repeat; }
.more { flex: none; width: 6px; height: 12px; }
.more::after { content: ""; border: 2px solid transparent; border-top-color: #111; border-bottom: 0; }
.more.narrow { width: 5px; }
.more.last { margin-right: 3px; }

.titlebar { display: flex; height: 14px; }
.quick { display: flex; align-items: center; flex: none; width: 129px; padding-left: 1px; height: 13px; }
.qb { flex: none; width: 13px; height: 12px; }
.qb svg { width: 11px; height: 11px; }
.caption { flex: 1; height: 11px; padding-left: 5px; background: linear-gradient(#4a4a54, #23232b); color: #fff; border-radius: 0 0 3px 3px; }
.win { display: flex; align-items: center; width: 36px; padding-left: 3px; box-sizing: border-box; }
.win button { flex: 1; height: 12px; }
.win svg { width: 9px; height: 9px; }

.ribbon { display: flex; align-items: center; height: 13px; padding: 0 1px; }
.rtab { box-sizing: border-box; flex: none; height: 13px; padding: 0 2px 0 1px; justify-content: flex-start; background: linear-gradient(#e6e6eb, #cfcfd6); border: 1px solid #bcbcc4; border-left-color: #f4f4f7; border-bottom: 0; border-radius: 2px 2px 0 0; }
.rtab.active { background: #fcfcfe; }
.rtab svg { width: 10px; height: 10px; }
.rtab .dd { width: 6px; height: 6px; margin-left: auto; color: #6a6aa0; }
.w40 { width: 40px; } .w44 { width: 44px; } .w46 { width: 46px; } .w48 { width: 48px; } .w50 { width: 50px; }
.w56 { width: 56px; } .w60 { width: 60px; } .w63 { width: 63px; } .w65 { width: 65px; }
.ribbon .qb { width: 15px; }

.toolbar { display: flex; align-items: center; box-sizing: border-box; height: 20px; padding-left: 3px; background: #fbfbfd; border-bottom: 1px solid #bdbdc3; border-top: 1px solid #cfcfd5; }
.tb { flex: none; width: 16px; height: 16px; box-sizing: border-box; }
.tb svg { width: 14px; height: 14px; }
.tb.slim { width: 14px; }
.tb.slim svg { width: 12px; height: 12px; }
.tb.on { background: #fbc38c; border: 1px solid #f3a865; }
.abc { font-style: italic; font-weight: 700; color: #2f6fc4; }
.preset { width: 68px; height: 14px; margin: 0; padding: 1px 0 0 3px; border: 0; border-radius: 0; appearance: none; color: #77777c; font: inherit; opacity: 1; background: linear-gradient(45deg, transparent 40%, #a0a0a4 40%, #a0a0a4 60%, transparent 60%) right 4px center / 3px 3px no-repeat, linear-gradient(-45deg, transparent 40%, #a0a0a4 40%, #a0a0a4 60%, transparent 60%) right 7px center / 3px 3px no-repeat, #cbcbcd; }
.slider { appearance: none; width: 56px; height: 14px; margin: 0 0 0 4px; background: linear-gradient(#aaa, #aaa) center / 100% 1px no-repeat; }
.slider::-webkit-slider-thumb { appearance: none; width: 9px; height: 9px; background: linear-gradient(45deg, transparent 43%, #444 43%, #444 57%, transparent 57%), linear-gradient(-45deg, transparent 43%, #444 43%, #444 57%, transparent 57%); }

.work { flex: 1; display: flex; min-height: 0; padding-top: 1px; }
.panel { flex: none; display: flex; flex-direction: column; width: 113px; box-sizing: border-box; }
.left { background: #fff; border: 1px solid #a4a4ac; border-width: 0 1px 1px; }
.phead { display: flex; align-items: center; height: 10px; padding: 0 2px; color: #fff; background: linear-gradient(#40404a, #22222a); }
.phead h2 { flex: 1; }
.phead button { width: 10px; height: 10px; }
.phead svg { width: 8px; height: 8px; }

.tree { list-style: none; margin: 0; padding: 1px 2px; }
.tree li { display: flex; align-items: center; height: 10px; white-space: nowrap; }
.tree .mark { width: 7px; height: 7px; margin: 0 1px; }
.tree .node { width: 10px; height: 10px; margin-right: 1px; }
.branch { position: relative; align-self: stretch; width: 11px; display: flex; align-items: center; }
.bare .branch { width: 10px; }
.branch::before { content: ""; position: absolute; left: 5px; top: 0; bottom: 0; border-left: 1px dotted #b0b0b0; }
.last .branch::before { bottom: 5px; }
.branch::after { content: ""; position: absolute; left: 5px; right: 0; top: 5px; border-top: 1px dotted #b0b0b0; }
.exp { position: relative; z-index: 1; box-sizing: border-box; width: 5px; height: 5px; margin-left: 3px; border: 1px solid #b0b0b6; background: linear-gradient(#555, #555) center / 3px 1px no-repeat, linear-gradient(#555, #555) center / 1px 3px no-repeat, #fff; }
.chosen { background: #efefef; padding-right: 1px; }

.middle { flex: 1; min-width: 0; display: flex; flex-direction: column; padding-left: 1px; }
.upper { flex: 1; display: flex; min-height: 0; }
.side { flex: none; width: 12px; display: flex; flex-direction: column; gap: 1px; }
.side button { flex-direction: column; justify-content: flex-start; padding-top: 1px; box-sizing: border-box; width: 11px; background: linear-gradient(90deg, #e9e9ee, #d2d2d9); border: 1px solid #bcbcc4; border-left: 0; border-radius: 0 2px 2px 0; }
.side svg { width: 9px; height: 9px; }
.side span { writing-mode: vertical-rl; line-height: 9px; }
.h35 { height: 35px; } .h48 { height: 48px; }
.doc { flex: 1; min-width: 0; display: flex; flex-direction: column; }
.dtabs { display: flex; height: 10px; }
.dt { padding: 0 3px 0 1px; background: #ececf0; border-right: 1px solid #c0c0c6; }
.dt svg { width: 9px; height: 9px; margin-right: 2px; }
.dt.cur { margin-left: 1px; padding: 0 4px 0 1px; background: #fbb777; border-color: #eea867; font-weight: 700; }
.mini { width: 10px; }
.mini svg { width: 8px; height: 8px; }
.view { position: relative; flex: 1; min-height: 0; overflow: hidden; border: 1px solid #7b7f8b; border-top-color: #44598a; border-right: 0; background: linear-gradient(#4b6699, #8f9dc0 50%, #e4e1e1); }
.scene { position: absolute; inset: 0; width: 100%; height: 100%; }
.dimtext { font: 9px "Liberation Sans", Arial, sans-serif; fill: #222; }
.triad { position: absolute; left: 7px; bottom: 8px; width: 40px; height: 52px; overflow: visible; }
.triad text { font: 8px "Liberation Sans", Arial, sans-serif; fill: #222; }
.vtools { position: absolute; right: 1px; top: 4px; height: 175px; display: flex; flex-direction: column; justify-content: space-between; }
.vrow { display: flex; align-items: center; width: 23px; }
.vb { width: 15px; height: 16px; }
.vb svg { width: 14px; height: 14px; }
.scale { position: absolute; right: 35px; bottom: 1px; width: 46px; text-align: center; font: 8px/9px "Liberation Sans", Arial, sans-serif; color: #333; }
.scale i { display: block; box-sizing: border-box; height: 6px; background: #f99b33; border: 1px solid #4a3a2c; }
.grip { position: absolute; box-sizing: border-box; background: #eee; border: 1px solid #6b6f78; }
.grip.right { right: 0; top: 45%; width: 4px; height: 45px; border-right: 0; }
.grip.bottom { left: calc(50% - 22px); bottom: 0; width: 45px; height: 3px; background: #9499a0; border-bottom: 0; }
.results { align-self: flex-start; height: 11px; margin: 1px 0 2px; padding: 0 4px 0 1px; gap: 1px; border: 1px solid #a8a8b0; border-top: 0; box-sizing: border-box; background: linear-gradient(#f0f0f4, #c9c9d0); border-radius: 0 0 2px 2px; }
.results svg { width: 9px; height: 9px; }

.proj { width: 114px; padding: 0 0 12px 1px; }
.pbox { flex: 1; background: #fff; border-bottom: 1px solid #a4a4ac; border-left: 1px solid #c0c0c6; }
.ptools { display: flex; align-items: center; height: 13px; border-bottom: 1px solid #d5d5da; }
.pb { flex: none; width: 13px; height: 12px; box-sizing: border-box; }
.pb.on { background: #fcc795; border: 1px solid #f3b079; }
.pb svg { width: 10px; height: 10px; }
.preview { margin-top: 2px; height: 92px; background: linear-gradient(#4a659c, #94a1bf 50%, #dedbda); }
.preview svg { width: 100%; height: 100%; }
.ptabs { display: flex; height: 11px; gap: 1px; }
.ptabs button { gap: 1px; padding: 0 2px; background: #f6f6f9; min-width: 0; }
.ptabs .cur { background: #fbb777; font-weight: 700; }
.ptabs svg { width: 9px; height: 9px; }

.status { display: flex; align-items: center; height: 13px; padding-left: 2px; }
.status > span:first-child { flex: 1; }
.coords { display: flex; gap: 5px; }
.status svg { width: 10px; height: 10px; margin: 0 16px; }
.status > span:last-child { width: 362px; }
</style>
